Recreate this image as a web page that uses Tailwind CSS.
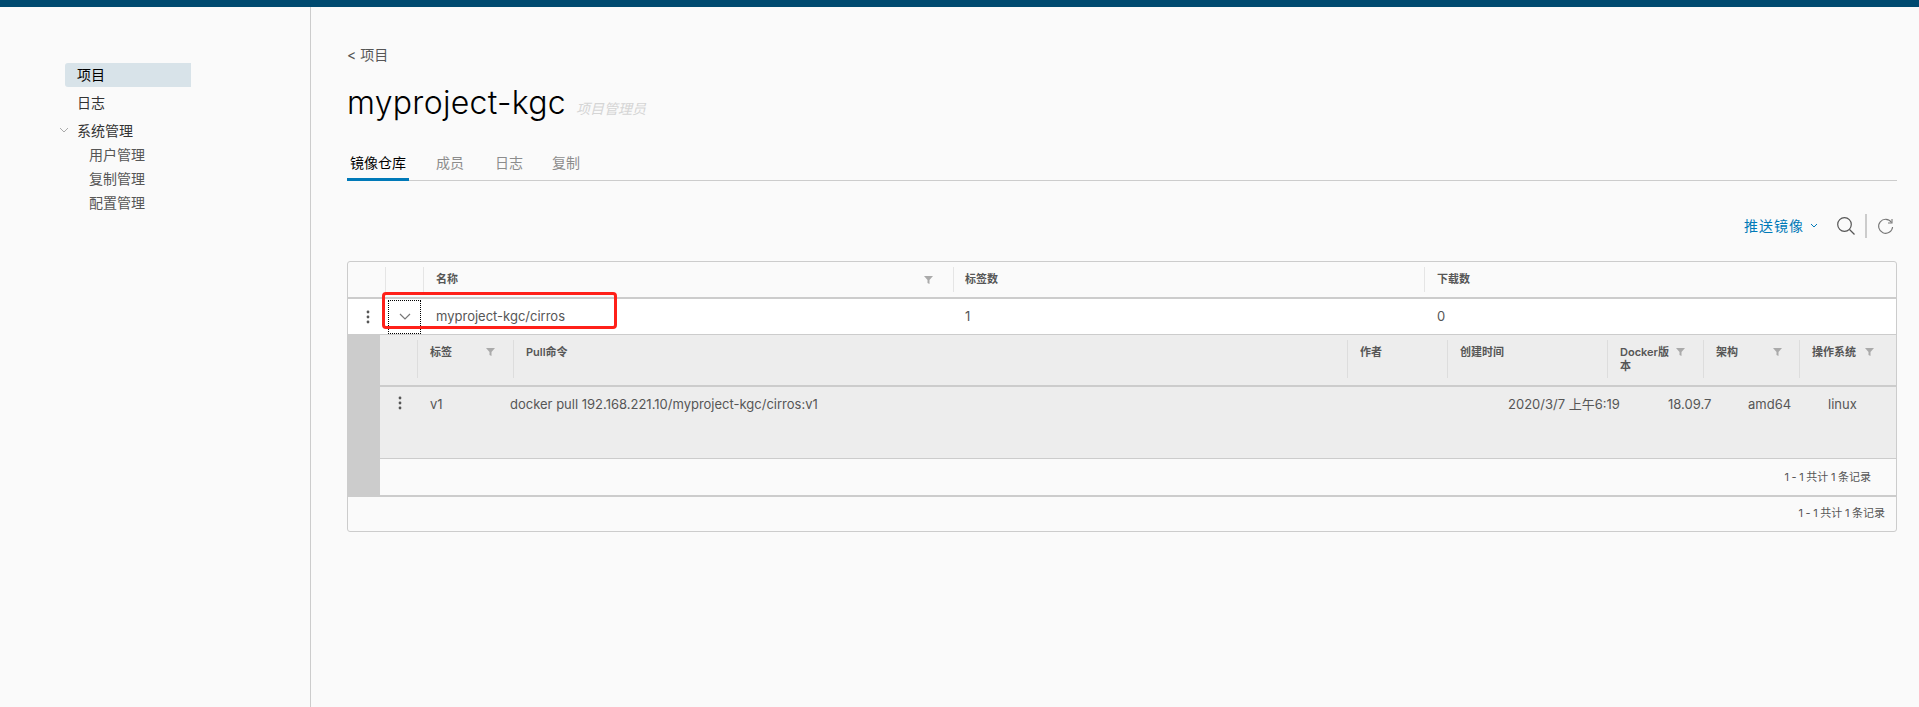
<!DOCTYPE html>
<html lang="zh-CN">
<head>
  <meta charset="UTF-8" />
  <title>myproject-kgc</title>
  <script src="https://cdn.jsdelivr.net/npm/@tailwindcss/browser@4"></script>
</head>
<body class="bg-[#fafafa] text-[#565656] font-['Inter','Noto_Sans_CJK_SC',sans-serif] overflow-hidden">
  <!-- Top bar -->
  <div class="h-[7px] bg-[#004a70]"></div>

  <div class="flex h-[700px]">
    <!-- Sidebar -->
    <nav class="w-[311px] shrink-0 border-r border-[#ccc] pt-[56px] pl-[65px] text-sm">
      <a class="block w-[126px] h-[24px] leading-[24px] pl-[12px] rounded-l-[3px] bg-[#d8e3e9] text-black">项目</a>
      <a class="block h-[24px] leading-[24px] mt-[4px] pl-[12px] text-[#333]">日志</a>
      <div class="relative h-[24px] leading-[24px] mt-[4px] pl-[12px] text-[#333]">
        <svg class="absolute left-[-6px] top-[8px] w-[10px] h-[7px]" viewBox="0 0 10 7" fill="none" stroke="#aaa"><path d="M1 1l4 4 4-4" /></svg>
        系统管理
      </div>
      <a class="block h-[24px] leading-[24px] pl-[24px]">用户管理</a>
      <a class="block h-[24px] leading-[24px] pl-[24px]">复制管理</a>
      <a class="block h-[24px] leading-[24px] pl-[24px]">配置管理</a>
    </nav>

    <!-- Main -->
    <main class="flex-1 pl-[36px] pr-[22px]">
      <div class="pt-[38px] h-[60px] text-sm leading-[20px]">&lt; 项目</div>
      <div class="flex items-baseline h-[48px] mt-[12px]">
        <h1 class="text-[32px] leading-[48px] font-light tracking-[0.3px] text-black">myproject-kgc</h1>
        <span class="ml-[10px] text-sm italic text-[#d5d5d5]">项目管理员</span>
      </div>

      <!-- Tabs -->
      <div class="flex h-[37px] mt-[17px] border-b border-[#ccc] text-sm text-[#8c8c8c]">
        <div class="w-[62px] h-[37px] leading-[38px] text-center border-b-[3px] border-[#0079b8] text-black">镜像仓库</div>
        <div class="ml-[27px] leading-[38px]">成员</div>
        <div class="ml-[31px] leading-[38px]">日志</div>
        <div class="ml-[29px] leading-[38px]">复制</div>
      </div>

      <!-- Toolbar -->
      <div class="flex items-center justify-end h-[26px] mt-[32px]">
        <span class="text-sm tracking-[1px] text-[#0079b8]">推送镜像</span>
        <svg class="ml-[6px] w-[8px] h-[6px]" viewBox="0 0 8 6" fill="none" stroke="#0079b8"><path d="M1 1l3 3 3-3" /></svg>
        <svg class="ml-[18px] w-[20px] h-[20px]" viewBox="0 0 20 20" fill="none" stroke="#565656" stroke-width="1.2"><circle cx="8.5" cy="8.5" r="6.8" /><path d="M13.5 13.5l5 5" /></svg>
        <div class="ml-[9px] w-[2px] h-[24px] bg-[#ccc]"></div>
        <svg class="ml-[10px] mr-[3px] w-[17px] h-[17px]" viewBox="0 0 17 17" fill="none" stroke="#777" stroke-width="1.1"><path d="M14.5 4.5A7 7 0 1 0 15.6 9" /><path d="M15 1v4h-4" /></svg>
      </div>

      <!-- Table -->
      <div class="relative mt-[22px] h-[271px] border border-[#ccc] rounded-[3px] bg-[#fafafa]">
        <!-- Header -->
        <div class="grid grid-cols-[38px_38px_530px_471px_1fr] h-[37px] border-b-2 border-[#ccc] text-[11px] font-semibold">
          <div class="my-[5px] border-r border-[#e5e5e5]"></div>
          <div class="my-[5px] border-r border-[#e5e5e5]"></div>
          <div class="flex items-center justify-between my-[5px] pl-[12px] pr-[20px] border-r border-[#e5e5e5]">名称<svg class="w-[9px] h-[8px]" viewBox="0 0 9 8" fill="#aaa"><path d="M0 0h9L5.5 4v4L3.5 7V4z" /></svg></div>
          <div class="flex items-center my-[5px] pl-[11px] border-r border-[#e5e5e5]">标签数</div>
          <div class="flex items-center my-[5px] pl-[12px]">下载数</div>
        </div>

        <!-- Row -->
        <div class="grid grid-cols-[38px_38px_530px_471px_1fr] h-[35px] bg-white items-center text-[13px]">
          <svg class="w-[4px] h-[14px] ml-[18px]" viewBox="0 0 4 14" fill="#565656"><circle cx="2" cy="2" r="1.4" /><circle cx="2" cy="7" r="1.4" /><circle cx="2" cy="12" r="1.4" /></svg>
          <div class="flex items-center justify-center w-[31px] h-[32px] ml-[3px] outline-1 outline-dotted outline-black">
            <svg class="w-[12px] h-[7px]" viewBox="0 0 12 7" fill="none" stroke="#777" stroke-width="1.2"><path d="M1 1l5 5 5-5" /></svg>
          </div>
          <div class="pl-[12px]">myproject-kgc/cirros</div>
          <div class="pl-[11px]">1</div>
          <div class="pl-[12px]">0</div>
        </div>

        <!-- Expanded detail -->
        <div class="flex h-[163px] border-b-2 border-[#ccc]">
          <div class="w-[32px] shrink-0 bg-[#ccc]"></div>
          <div class="flex-1 flex flex-col">
            <!-- Detail header -->
            <div class="grid grid-cols-[38px_96px_834px_100px_160px_96px_96px_1fr] h-[53px] border-t border-b-2 border-[#ccc] bg-[#ededed] text-[11px] font-semibold leading-[14px]">
              <div class="mt-[5px] mb-[7px] border-r border-[#ddd]"></div>
              <div class="flex items-start justify-between mt-[5px] mb-[7px] pt-[5px] pl-[12px] pr-[18px] border-r border-[#ddd]">标签<svg class="w-[9px] h-[8px] mt-[3px]" viewBox="0 0 9 8" fill="#aaa"><path d="M0 0h9L5.5 4v4L3.5 7V4z" /></svg></div>
              <div class="mt-[5px] mb-[7px] pt-[5px] pl-[12px] border-r border-[#ddd]">Pull命令</div>
              <div class="mt-[5px] mb-[7px] pt-[5px] pl-[12px] border-r border-[#ddd]">作者</div>
              <div class="mt-[5px] mb-[7px] pt-[5px] pl-[12px] border-r border-[#ddd]">创建时间</div>
              <div class="flex items-start justify-between mt-[5px] mb-[7px] pt-[5px] pl-[12px] pr-[18px] border-r border-[#ddd]"><span class="w-[56px]">Docker版本</span><svg class="w-[9px] h-[8px] mt-[3px] shrink-0" viewBox="0 0 9 8" fill="#aaa"><path d="M0 0h9L5.5 4v4L3.5 7V4z" /></svg></div>
              <div class="flex items-start justify-between mt-[5px] mb-[7px] pt-[5px] pl-[12px] pr-[17px] border-r border-[#ddd]">架构<svg class="w-[9px] h-[8px] mt-[3px]" viewBox="0 0 9 8" fill="#aaa"><path d="M0 0h9L5.5 4v4L3.5 7V4z" /></svg></div>
              <div class="flex items-start justify-between mt-[5px] mb-[7px] pt-[5px] pl-[12px] pr-[22px]">操作系统<svg class="w-[9px] h-[8px] mt-[3px]" viewBox="0 0 9 8" fill="#aaa"><path d="M0 0h9L5.5 4v4L3.5 7V4z" /></svg></div>
            </div>
            <!-- Detail row -->
            <div class="flex h-[72px] border-b border-[#ccc] bg-[#ededed] pt-[7px] text-[13px] leading-[20px]">
              <svg class="w-[4px] h-[14px] ml-[18px] mt-[2px]" viewBox="0 0 4 14" fill="#565656"><circle cx="2" cy="2" r="1.4" /><circle cx="2" cy="7" r="1.4" /><circle cx="2" cy="12" r="1.4" /></svg>
              <div class="w-[80px] ml-[28px]">v1</div>
              <div class="w-[998px]">docker pull 192.168.221.10/myproject-kgc/cirros:v1</div>
              <div class="w-[160px] whitespace-nowrap">2020/3/7 上午6:19</div>
              <div class="w-[80px]">18.09.7</div>
              <div class="w-[80px]">amd64</div>
              <div>linux</div>
            </div>
            <!-- Detail footer -->
            <div class="flex items-center justify-end h-[36px] pr-[25px] text-[11px] [word-spacing:-0.5px]">1 - 1 共计 1 条记录</div>
          </div>
        </div>

        <!-- Footer -->
        <div class="flex items-center justify-end h-[34px] pb-[2px] pr-[11px] text-[11px] [word-spacing:-0.5px]">1 - 1 共计 1 条记录</div>

        <!-- Red annotation -->
        <div class="absolute left-[34px] top-[30px] w-[235px] h-[37px] border-[3px] border-[#ff2019] rounded-[4px]"></div>
      </div>
    </main>
  </div>
</body>
</html>
